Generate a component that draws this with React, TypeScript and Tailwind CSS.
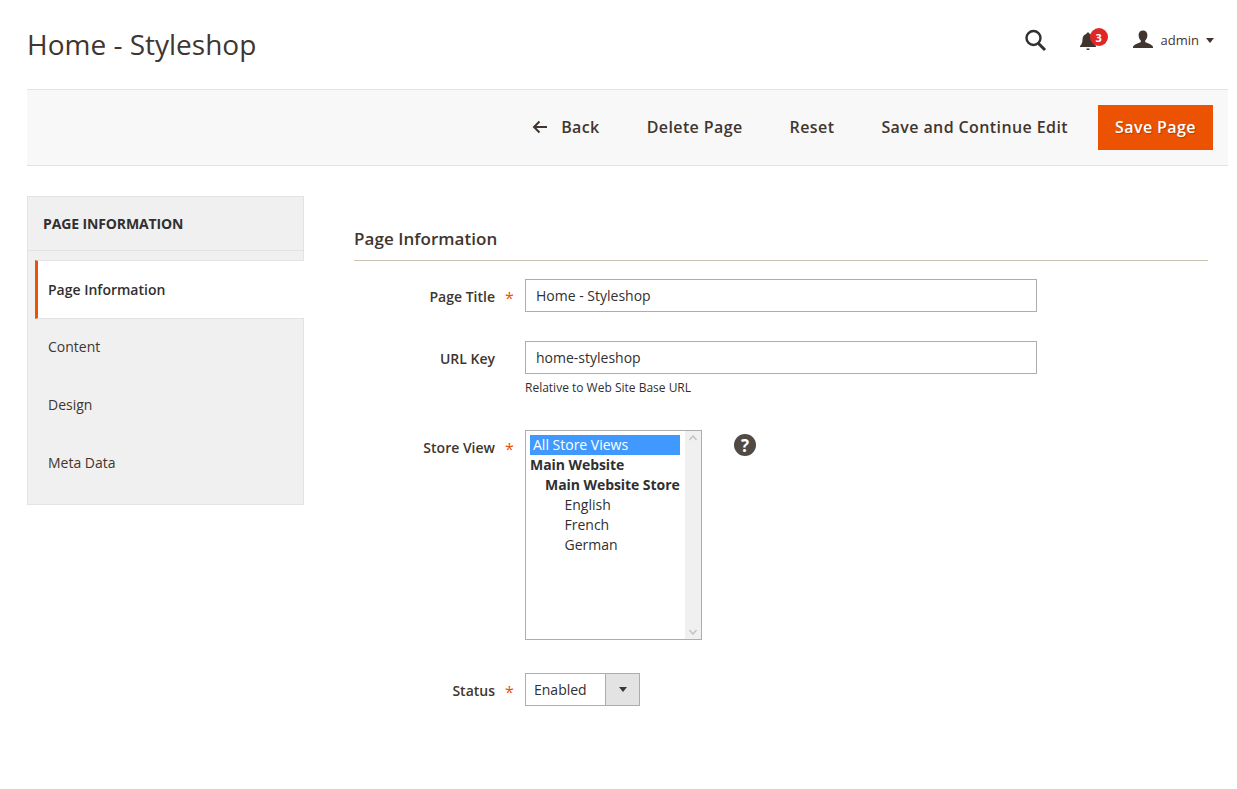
const navItems = ["Content", "Design", "Meta Data"];

function FieldLabel({ text, required }: { text: string; required?: boolean }) {
  return (
    <div className="flex h-[33px] w-[171px] shrink-0 items-start justify-end pr-[30px] pt-[8px] text-[14px] font-semibold leading-[20px] text-[#41362f]">
      <span>{text}</span>
      {required && (
        <span className="relative ml-[10px] mr-[-19px] mt-[1px] w-[9px] text-[16px] font-normal leading-[20px] text-[#eb5202]">*</span>
      )}
    </div>
  );
}

function TextField({ value }: { value: string }) {
  return (
    <div className="flex h-[33px] w-[512px] items-center border border-[#adadad] bg-white pl-[10px] text-[14px] text-[#303030]">
      {value}
    </div>
  );
}

export default function App() {
  return (
    <div className="min-h-[789px] bg-white pl-[27px] pr-[9px] font-['Open_Sans',sans-serif] text-[#303030]">
      <header className="flex h-[89px] items-start justify-between">
        <h1 className="mt-[25px] text-[28px] font-normal leading-[38px] text-[#41362f]">Home - Styleshop</h1>
        <div className="mr-[14px] mt-[28px] flex items-center text-[#41362f]">
          <svg width="24" height="24" viewBox="0 0 24 24" className="text-[#303030]" fill="none" stroke="currentColor">
            <circle cx="10.5" cy="10" r="7" strokeWidth="2.4" />
            <path d="M15.5 15.5 L22 22" strokeWidth="3" />
          </svg>
          <div className="relative ml-[32px] h-[24px] w-[30px]">
            <svg width="18" height="20" viewBox="0 0 18 20" className="absolute left-0 top-[4px]" fill="#41362f">
              <path d="M9 0.5c1 0 1.6.7 1.6 1.5 2.8.6 3.9 2.9 3.9 5.6 0 3 .8 5 2.5 6.4v1H1v-1c1.700-1.400 2.500-3.400 2.500-6.400 0-2.700 1.100-5 3.900-5.600C7.400 1.200 8 .5 9 .5z" />
              <path d="M7.400 16.500h3.200c0 1-.7 1.600-1.600 1.600s-1.600-.6-1.600-1.600z" />
            </svg>
            <span className="absolute left-[11px] top-0 flex h-[18px] w-[18px] items-center justify-center rounded-full bg-[#e22626] text-[11px] font-bold leading-none text-white">
              3
            </span>
          </div>
          <svg width="22" height="20" viewBox="0 0 22 20" className="ml-[23px]" fill="#41362f">
            <path d="M11 .5c2.700 0 4.400 1.900 4.400 4.700 0 2.200-.9 4.200-2.200 5.300v1.500c1.500 1.200 6.400 2 7.800 4.800V18H1v-1.200c1.400-2.800 6.300-3.600 7.800-4.800v-1.500C7.500 9.400 6.600 7.400 6.600 5.200 6.600 2.400 8.300.5 11 .5z" />
          </svg>
          <span className="ml-[7px] text-[13px] leading-[20px]">admin</span>
          <span className="ml-[7px] h-0 w-0 border-x-[4px] border-t-[5px] border-x-transparent border-t-[#41362f]" />
        </div>
      </header>

      <div className="flex h-[77px] items-center justify-end border-y border-[#e3e3e3] bg-[#f8f8f8] pb-[2px] pr-[15px] text-[16px] font-semibold tracking-[0.4px] text-[#41362f]">
        <svg width="16" height="14" viewBox="0 0 16 14" className="mr-[13px]" fill="none" stroke="#41362f" strokeWidth="2">
          <path d="M15 7H2M7.500 1.500 2 7l5.500 5.500" />
        </svg>
        <span>Back</span>
        <span className="ml-[47px]">Delete Page</span>
        <span className="ml-[47px]">Reset</span>
        <span className="ml-[47px]">Save and Continue Edit</span>
        <button className="ml-[30px] mb-[-2px] h-[45px] w-[115px] bg-[#eb5202] pb-[2px] text-[16px] font-semibold tracking-[0.4px] text-white [text-shadow:1px_1px_1px_rgba(0,0,0,0.25)]">Save Page</button>
      </div>

      <div className="mt-[30px] flex items-start">
        <aside className="w-[277px] shrink-0 border border-[#e3e3e3] bg-[#f0f0f0]">
          <div className="flex h-[54px] items-center border-b border-[#e3e3e3] pl-[15px] text-[14px] font-bold tracking-[-0.12px] text-[#303030]">
            PAGE INFORMATION
          </div>
          <div className="mt-[9px] ml-[7px] mr-[-1px] flex h-[59px] items-center border-y border-[#e3e3e3] border-l-[3px] border-l-[#eb5202] bg-white pl-[10px] text-[14px] font-semibold text-[#303030]">
            Page Information
          </div>
          <div className="mt-[-2px] pb-[13px]">
            {navItems.map((item) => (
              <div key={item} className="flex h-[58px] items-center pl-[20px] text-[14px] text-[#41362f]">
                {item}
              </div>
            ))}
          </div>
        </aside>

        <main className="ml-[50px] w-[854px]">
          <h2 className="mt-[31px] border-b border-[#cac3b4] pb-[10px] text-[17px] font-semibold leading-[23px] tracking-[0.05px] text-[#41362f]">
            Page Information
          </h2>

          <div className="mt-[18px] flex">
            <FieldLabel text="Page Title" required />
            <TextField value="Home - Styleshop" />
          </div>

          <div className="mt-[29px] flex">
            <FieldLabel text="URL Key" />
            <div>
              <TextField value="home-styleshop" />
              <p className="mt-[5px] text-[12px] leading-[18px] text-[#303030]">Relative to Web Site Base URL</p>
            </div>
          </div>

          <div className="mt-[33px] flex items-start">
            <FieldLabel text="Store View" required />
            <div className="flex h-[210px] w-[177px] border border-[#adadad] bg-white text-[14px] leading-[20px] text-[#303030]">
              <div className="flex-1 pl-[4px] pt-[4px]">
                <div className="w-[150px] bg-[#3f99ff] pl-[3px] text-white">All Store Views</div>
                <div className="font-bold tracking-[-0.06px]">Main Website</div>
                <div className="whitespace-nowrap pl-[15px] font-bold tracking-[-0.06px]">Main Website Store</div>
                <div className="pl-[34.5px]">English</div>
                <div className="pl-[34.5px]">French</div>
                <div className="pl-[34.5px]">German</div>
              </div>
              <div className="flex w-[16px] flex-col items-center justify-between bg-[#f0f0f0] py-[2px] text-[#c4c4c4]">
                <svg width="10" height="10" viewBox="0 0 10 10" fill="none" stroke="currentColor" strokeWidth="1.500">
                  <path d="M1.500 7 5 3l3.500 4" />
                </svg>
                <svg width="10" height="10" viewBox="0 0 10 10" fill="none" stroke="currentColor" strokeWidth="1.500">
                  <path d="M1.500 3 5 7l3.500-4" />
                </svg>
              </div>
            </div>
            <span className="ml-[32px] mt-[4px] flex h-[22px] w-[22px] items-center justify-center rounded-full bg-[#514943] text-[17px] font-bold leading-none text-white">
              ?
            </span>
          </div>

          <div className="mt-[33px] flex">
            <FieldLabel text="Status" required />
            <div className="flex h-[33px] w-[115px] border border-[#adadad] bg-white text-[14px] text-[#303030]">
              <div className="flex flex-1 items-center pl-[8px]">Enabled</div>
              <div className="flex w-[34px] items-center justify-center border-l border-[#adadad] bg-[#e3e3e3]">
                <span className="h-0 w-0 border-x-[4px] border-t-[5px] border-x-transparent border-t-[#41362f]" />
              </div>
            </div>
          </div>
        </main>
      </div>
    </div>
  );
}
